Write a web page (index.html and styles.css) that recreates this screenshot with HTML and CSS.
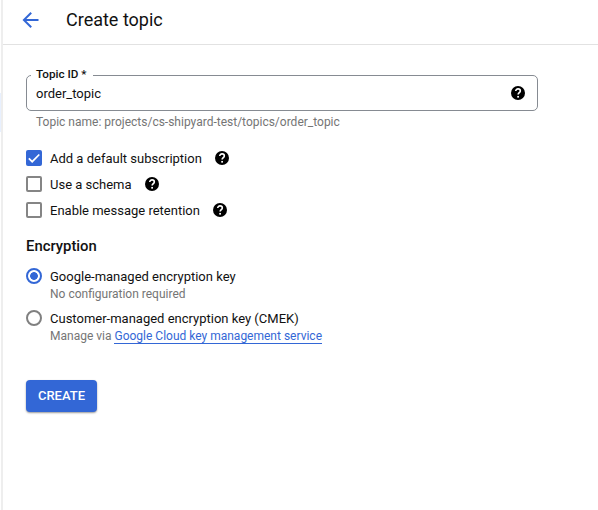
FILE: index.html
```html
<!DOCTYPE html>
<html lang="en">
<head>
<meta charset="utf-8">
<title>Create topic</title>
<link rel="stylesheet" href="styles.css">
</head>
<body>
<svg class="defs" width="0" height="0"><symbol id="help" viewBox="2 2 20 20"><circle cx="12" cy="12" r="10"/><path d="M8.800 9.300c0-1.900 1.400-3.200 3.300-3.200s3.200 1.200 3.200 2.900c0 2.400-3.100 2.700-3.100 5.300" fill="none" stroke="#fff" stroke-width="2.300"/><rect x="10.900" y="16.200" width="2.500" height="2.400" fill="#fff"/></symbol></svg>
<div class="rail"></div>
<div class="page">
  <header class="header">
    <svg class="back" viewBox="4 4 16 16"><path d="M20 11H7.830l5.590-5.590L12 4l-8 8 8 8 1.410-1.410L7.830 13H20v-2z"/></svg>
    <h1 class="title">Create topic</h1>
  </header>
  <main class="form">
    <fieldset class="field">
      <legend class="legend">Topic ID *</legend>
      <div class="input">
        <span class="value">order_topic</span>
        <svg class="help"><use href="#help"/></svg>
      </div>
    </fieldset>
    <p class="hint">Topic name: projects/cs-shipyard-test/topics/order_topic</p>
    <div class="checks">
      <div class="check"><span class="box checked"><svg viewBox="0 0 16 16"><path d="M2.800 8.300l3.400 3.400L13.300 4.500"/></svg></span><span class="label">Add a default subscription</span><svg class="help"><use href="#help"/></svg></div>
      <div class="check"><span class="box"></span><span class="label">Use a schema</span><svg class="help"><use href="#help"/></svg></div>
      <div class="check"><span class="box"></span><span class="label">Enable message retention</span><svg class="help"><use href="#help"/></svg></div>
    </div>
    <h2 class="section">Encryption</h2>
    <div class="option"><span class="radio selected"></span><div><div class="label">Google-managed encryption key</div><div class="note">No configuration required</div></div></div>
    <div class="option"><span class="radio"></span><div><div class="label">Customer-managed encryption key (CMEK)</div><div class="note">Manage via <a class="link">Google Cloud key management service</a></div></div></div>
    <button class="create">CREATE</button>
  </main>
</div>
</body>
</html>
```
FILE: styles.css
```css
* { box-sizing: border-box; }
body { margin: 0; height: 510px; display: flex; background: #fff; color: #111; font-family: Roboto, sans-serif; font-size: 13px; overflow: hidden; }
.defs { position: absolute; }
.rail { width: 3px; border-right: 2px solid #eee; background: linear-gradient(#fff 93px, #e8f0fe 93px, #e8f0fe 132px, #fff 132px); }
.page { flex: 1; }
.header { height: 45px; border-bottom: 1px solid #e2e2e2; display: flex; align-items: center; padding: 0 0 4px 19px; }
.back { width: 17px; height: 16px; fill: #3367d6; margin-right: 27px; }
.title { margin: 0; font-size: 18px; line-height: 24px; font-weight: 400; }
.form { padding: 22px 60px 0 23px; }
.field { margin: 0; height: 44px; width: 512px; border: 1px solid #868b92; border-radius: 5px; padding: 0 12px 0 4px; }
.legend { padding: 0 6px 1px 5px; font-size: 11.700px; line-height: 15px; font-weight: 500; }
.input { display: flex; align-items: center; justify-content: space-between; height: 20px; padding-left: 5px; }
.value { line-height: 20px; padding-top: 1px; }
.help { width: 14px; height: 14px; flex: none; fill: #000; }
.hint { margin: 3px 0 0 10px; font-size: 12px; line-height: 16px; color: #757575; }
.checks { margin-top: 15px; }
.check { height: 26px; display: flex; align-items: center; }
.box { width: 16px; height: 16px; margin-right: 8px; border: 2px solid #858585; border-radius: 2px; }
.box svg { display: block; width: 16px; height: 16px; fill: none; stroke: #fff; stroke-width: 1.700; }
.checked { border: 0; background: #3367d6; }
.label { line-height: 21px; height: 20px; white-space: nowrap; }
.check .help { margin-left: 13px; }
.section { margin: 13px 0 10px; font-size: 14.850px; line-height: 20px; font-weight: 500; }
.option { display: flex; height: 42px; }
.radio { width: 16px; height: 16px; margin: 2px 8px 0 0; border: 2px solid #808080; border-radius: 50%; }
.selected { border-color: #3367d6; background: radial-gradient(circle, #3367d6 0 3.500px, transparent 4.200px); }
.note { font-size: 12px; line-height: 16px; color: #757575; white-space: nowrap; }
.link { color: #3367d6; border-bottom: 1px solid #3367d6; }
.create { display: block; margin-top: 30px; width: 71px; height: 32px; padding: 0 0 1px; border: 0; border-radius: 4px; background: #3367d6; color: #fff; font: 500 13px Roboto, sans-serif; box-shadow: 0 1px 2px rgba(0,0,0,.4); }
```
